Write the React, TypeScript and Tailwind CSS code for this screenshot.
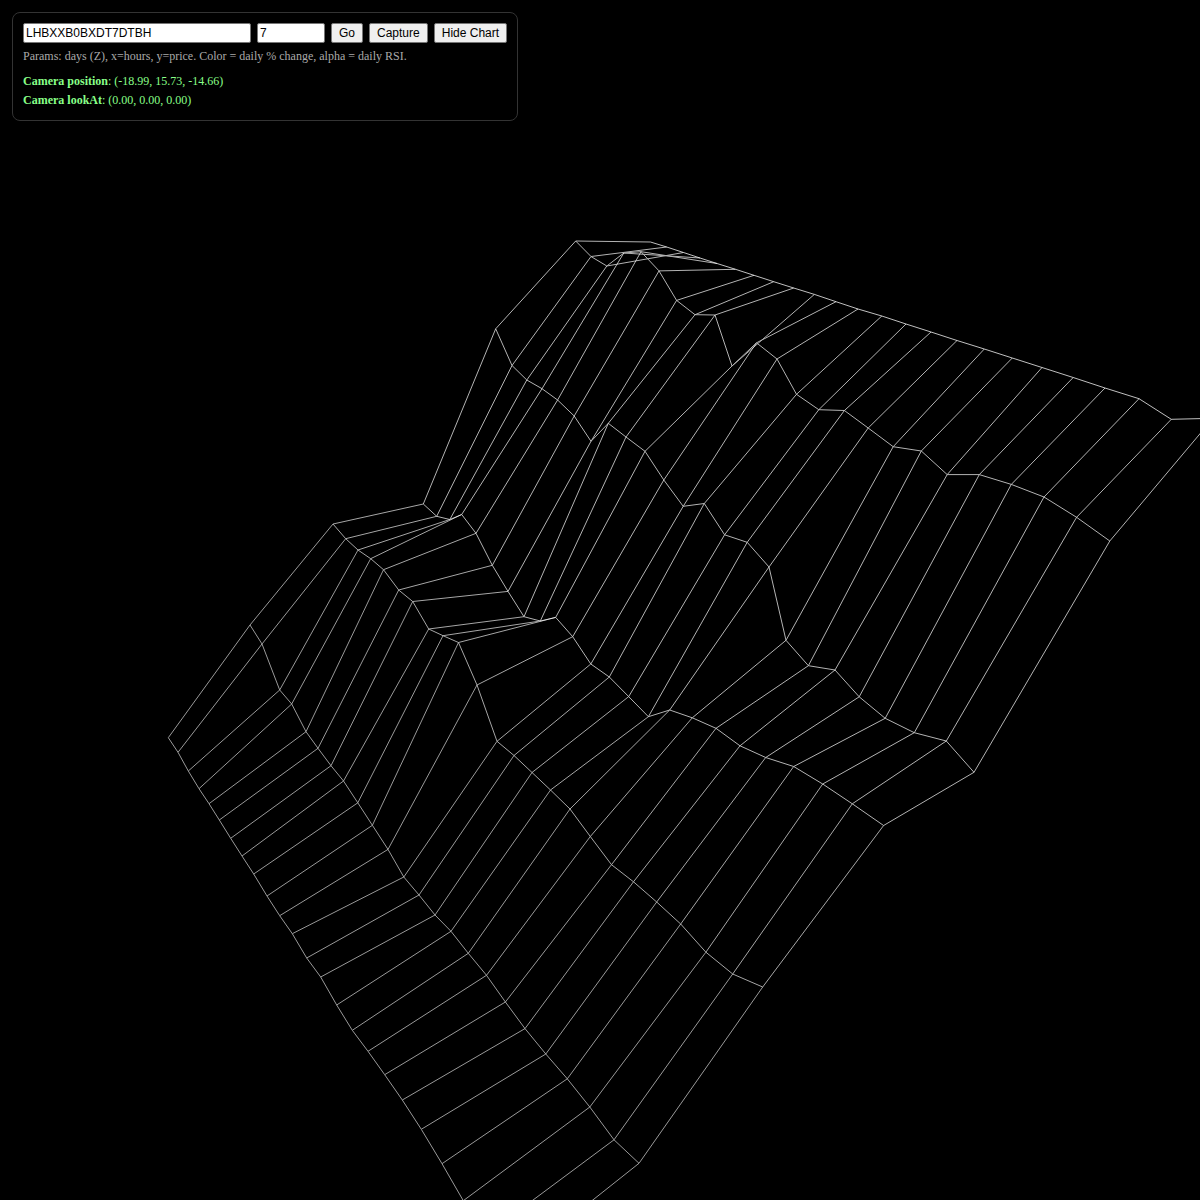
import { useState } from "react";

type Point = [number, number];

// One projected price curve per day, 24 hourly points each.
const DAYS: Point[][] = [
  [[168.3,737.7],[178,752.3],[188.3,771],[199,788.7],[209,803.7],[219.3,820],[230.7,838.3],[242,856],[253.7,874],[267,896],[279.7,915.7],[292.3,933.7],[306.7,958],[320.7,977],[336.7,1005],[352.3,1030.3],[368,1051.3],[384.7,1074.7],[402.3,1100],[421.3,1129.3],[442,1163.7],[463.3,1200.7],[486,1235],[511,1265]],
  [[250,625],[262,644],[279.7,690],[291.7,704],[306,731.7],[318,748.3],[331,765.7],[343.5,781],[357.8,802.8],[372.4,825.3],[388,849.4],[403.8,877],[419,895],[435,915],[451,931.3],[468.3,953.3],[486.5,975.3],[505.4,1002],[525,1028.6],[545.8,1054],[567.3,1078.8],[589.8,1107],[614,1139.8],[639,1163.3]],
  [[333,524],[345.7,538.7],[358,550],[370.7,558.7],[383.5,569.7],[398.7,590],[412.7,601.5],[428.7,629],[443,635.7],[458.5,642.5],[477,685],[497,741.3],[514,755.5],[532,772.5],[550.5,790],[570,809],[590.3,836.5],[611.5,864.7],[633.5,881.8],[656.7,902],[680.7,924],[705.9,952.2],[732.7,974],[762.7,987]],
  [[423.3,504],[436.7,516.3],[449.8,519.5],[461.7,514.5],[476,533.3],[492.3,565.3],[508,591.4],[524,616.7],[540.3,621],[555.7,617.4],[572.7,636.7],[590.8,664],[609.3,677],[628.7,696.6],[648.4,716.7],[669.7,710],[692.3,717.8],[716,728.3],[740,745.8],[765.7,757.5],[793.7,766.5],[822.7,784],[852.3,803.8],[883.6,825.5]],
  [[495.7,328.8],[512,365.5],[526.8,380],[542,388.7],[557.6,400],[574.2,416],[591,441.3],[608.3,423.3],[626,437],[645,451.3],[663.8,480],[683.2,506.3],[704.3,503.5],[724.6,534.8],[747.2,542.3],[769,567],[786,640.3],[808.4,665.7],[835,670],[859.2,696.8],[885.2,718.3],[914.3,732.7],[946.3,741],[974,772.3]],
  [[575.7,241],[591,256.5],[606.8,266],[623.8,253],[641,251.7],[659,270.9],[676.6,300.4],[695,314.7],[715,315],[732,366],[756.5,342.8],[777,359],[796.5,394.3],[818.8,409.7],[844.4,410.5],[868.2,428],[893.2,446.7],[921.3,451],[947.2,474.6],[979.3,474.6],[1011.3,484.4],[1044,497],[1076.6,517.3],[1109.8,541]],
  [[650.5,242],[666.7,247],[683.5,252.5],[700,258],[717,263.5],[735.5,269.3],[754,275.3],[773.7,281.7],[793.7,288],[814.4,294.4],[836,301.7],[858,309],[881.8,316],[906,324],[931,332],[957,340.5],[984.3,349],[1012.3,358],[1042,367.5],[1073.2,377.5],[1105,388],[1139,398.7],[1171.3,419.3],[1213,418.3]],
];

const DAY_OPACITY = ["opacity-60", "opacity-60", "opacity-65", "opacity-70", "opacity-70", "opacity-70", "opacity-75"];

const toPoints = (points: Point[]) => points.map((p) => p.join(",")).join(" ");

function SurfaceChart() {
  return (
    <svg
      className="absolute inset-0 h-full w-full"
      viewBox="0 0 1200 1200"
      preserveAspectRatio="xMidYMid slice"
      fill="none"
      stroke="#fff"
      strokeWidth={1}
      role="img"
      aria-label="Hourly prices by day"
    >
      {DAYS.map((day, d) => (
        <g key={d} className={DAY_OPACITY[d]}>
          <polyline points={toPoints(day)} />
          {d + 1 < DAYS.length &&
            day.map((point, h) => <polyline key={h} points={toPoints([point, DAYS[d + 1][h]])} />)}
        </g>
      ))}
    </svg>
  );
}

const inputClass =
  "h-5 rounded-xs border border-[#767676] bg-white px-0.5 font-['Liberation_Sans',Arial,sans-serif] text-xs text-black";
const buttonClass =
  "h-5 rounded-xs border border-[#767676] bg-[#efefef] px-[7px] font-['Liberation_Sans',Arial,sans-serif] text-xs leading-none whitespace-nowrap text-black";

export default function App() {
  const [symbol, setSymbol] = useState("LHBXXB0BXDT7DTBH");
  const [days, setDays] = useState("7");
  const [chartVisible, setChartVisible] = useState(true);

  return (
    <main className="relative h-screen overflow-hidden bg-black font-['Liberation_Serif','Times_New_Roman',serif]">
      {chartVisible && <SurfaceChart />}
      <section className="absolute top-3 left-3 rounded-lg border border-[#333] bg-black/60 p-2.5 text-xs">
        <form className="flex gap-1.5" onSubmit={(e) => e.preventDefault()}>
          <input
            aria-label="Symbol"
            className={`${inputClass} w-[228px]`}
            value={symbol}
            onChange={(e) => setSymbol(e.target.value)}
          />
          <input
            aria-label="Days"
            inputMode="numeric"
            className={`${inputClass} w-[68px]`}
            value={days}
            onChange={(e) => setDays(e.target.value)}
          />
          <button type="submit" className={buttonClass}>Go</button>
          <button type="button" className={buttonClass}>Capture</button>
          <button type="button" className={buttonClass} onClick={() => setChartVisible(!chartVisible)}>
            {chartVisible ? "Hide Chart" : "Show Chart"}
          </button>
        </form>
        <p className="mt-1.5 leading-[14px] text-[#aaa]">
          Params: days (Z), x=hours, y=price. Color = daily % change, alpha = daily RSI.
        </p>
        <div className="mt-[9px] leading-[19px] text-[#88ff88]">
          <p><b>Camera position</b>: (-18.99, 15.73, -14.66)</p>
          <p><b>Camera lookAt</b>: (0.00, 0.00, 0.00)</p>
        </div>
      </section>
    </main>
  );
}
